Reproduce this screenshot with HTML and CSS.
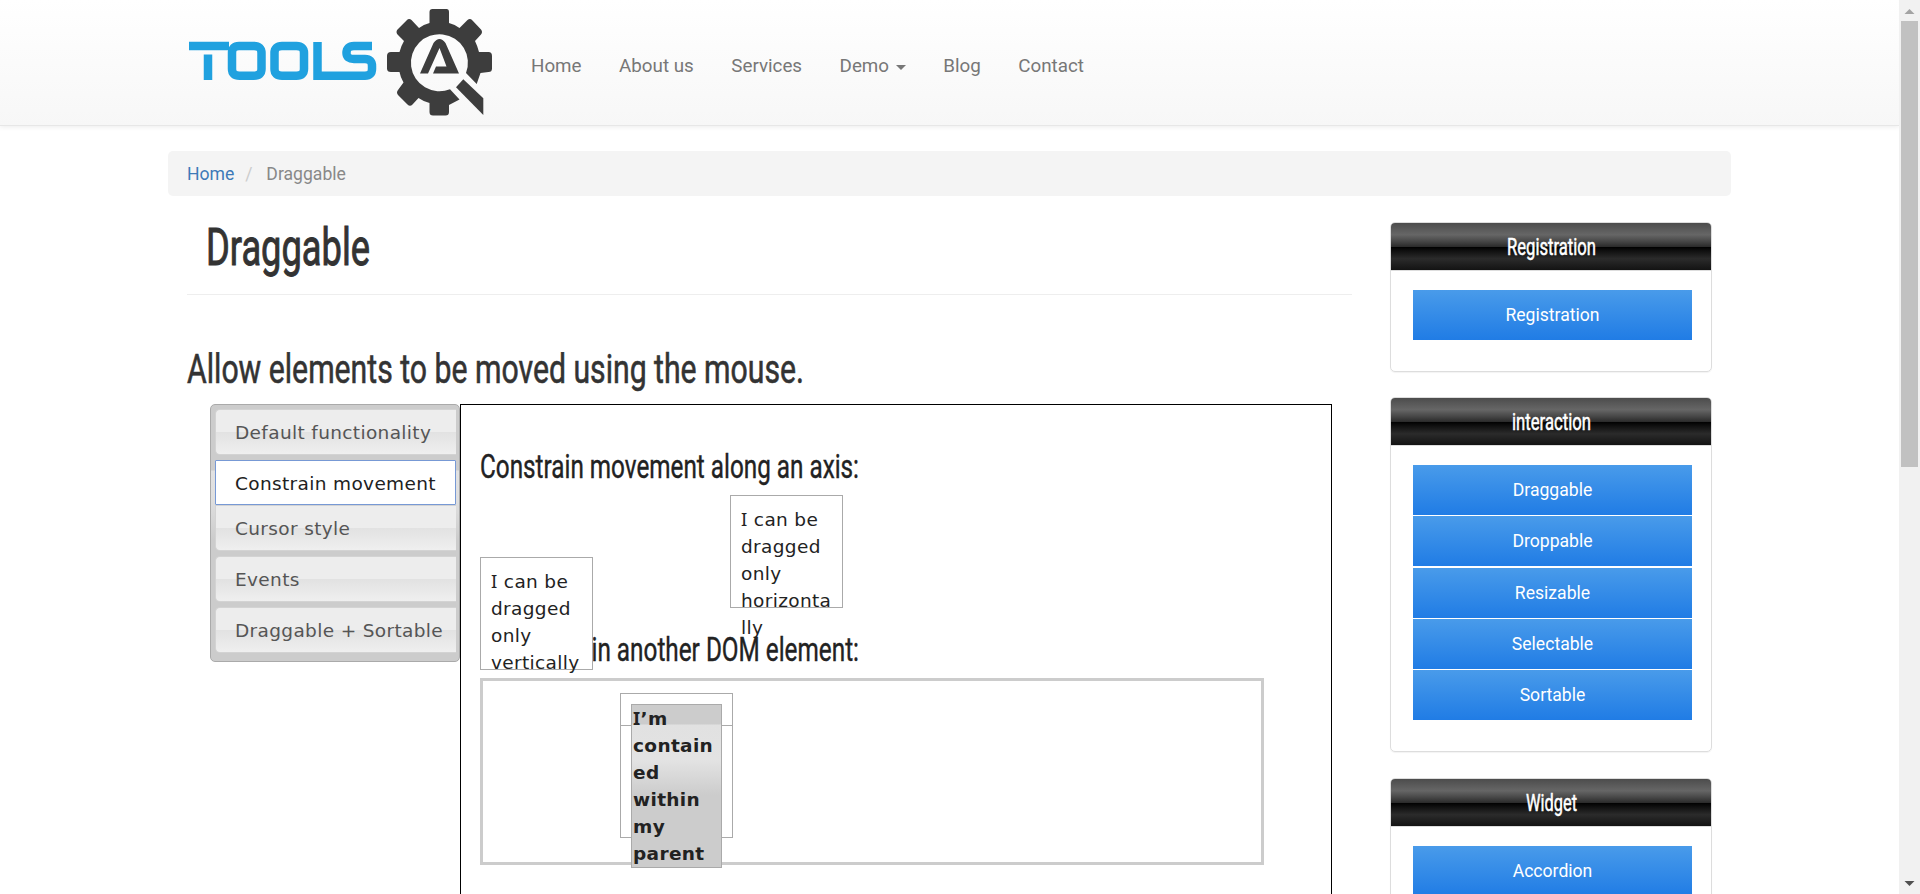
FILE: index.html
```html
<!DOCTYPE html>
<html lang="en">
<head>
<meta charset="utf-8">
<title>Draggable</title>
<link rel="stylesheet" href="styles.css">
</head>
<body>
<div class="page">
  <header class="navbar">
    <svg class="logo" width="310" height="120" viewBox="0 0 310 120">
      <g fill="none" stroke="#20a1df" stroke-width="8.5">
        <path d="M2 46H42M21 54.500V80"/>
        <path d="M52 46H67Q74.500 46 74.500 53V69Q74.500 75.700 67 75.700H52.500Q45 75.700 45 69V53Q45 46 52 46Z"/>
        <path d="M95 46H109.500Q117 46 117 53V69Q117 75.700 109.500 75.700H95Q87.500 75.700 87.500 69V53Q87.500 46 95 46Z"/>
        <path d="M130.500 42V75.700H178Q185 75.700 185 69V66Q185 59 178 59H167Q159.500 59 159.500 53Q159.500 46 167 46H185"/>
      </g>
      <g fill="#3d3d3d">
        <path d="M245.500 9H259.500Q262 9 262 12V23Q268 24.500 272.500 28L280.500 20Q283 18 285.500 20.500L294 29.500Q296 32 294 34.500L288 41Q290.500 46 292 52H301.500Q305 52 305 56V68.500Q305 72 301.500 72L293.500 73L289.700 84L279 73A28.500 28.500 0 1 0 263 89.200L272.500 99.500L262 105V112Q262 115.600 258.500 115.600H246Q242.500 115.600 242.500 112V103Q236.500 101.500 231.500 98L225.500 104.500Q223 107 220.500 104.500L211 95Q209 92.500 211 90L216.500 82.500Q213.500 77.500 212.500 72H204Q200 72 200 68.500V56Q200 52 204 52H212.500Q214 46 217 41L210.500 34.500Q208.500 32 210.500 29.500L219.500 20.500Q222 18 224.500 20L232 28Q236.500 24.500 242.500 23V12Q242.500 9 245.500 9Z"/>
        <path d="M276.300 79.300L269 87.300L296.300 115V98.300Z"/>
        <path d="M233 73.500L246.500 43Q252.500 35 258.500 43L272 73.500H246L249 66.500H259.500L252.500 48L241 73.500Z"/>
      </g>
    </svg>
    <nav class="menu">
      <a>Home</a><a>About us</a><a>Services</a><a>Demo <i class="caret"></i></a><a>Blog</a><a>Contact</a>
    </nav>
  </header>
  <div class="container">
    <div class="breadcrumb"><a>Home</a><span class="sep">/</span><span>Draggable</span></div>
    <div class="columns">
      <main class="main">
        <h1 class="title"><svg class="heading" width="600" height="73"><text x="19" y="44" font-size="51.600" textLength="164" lengthAdjust="spacingAndGlyphs">Draggable</text></svg></h1>
        <h2 class="subtitle"><svg class="heading" width="700" height="50"><text x="0" y="38" font-size="41.200" textLength="617" lengthAdjust="spacingAndGlyphs">Allow elements to be moved using the mouse.</text></svg></h2>
        <div class="tabs">
          <ul class="tablist">
            <li class="tab">Default functionality</li>
            <li class="tab active">Constrain movement</li>
            <li class="tab joined">Cursor style</li>
            <li class="tab">Events</li>
            <li class="tab">Draggable + Sortable</li>
          </ul>
          <section class="content">
            <svg class="heading dark" width="500" height="42"><text x="0" y="30" font-size="32.800" textLength="379" lengthAdjust="spacingAndGlyphs">Constrain movement along an axis:</text></svg>
            <div class="drag horizontal"><span class="cap">I</span> can be dragged only horizontally</div>
            <div class="drag vertical"><span class="cap">I</span> can be dragged only vertically</div>
            <svg class="heading dark second" width="500" height="42"><text x="1" y="30" font-size="32.800" textLength="110" lengthAdjust="spacingAndGlyphs">Or to with</text><text x="111.500" y="30" font-size="32.800" textLength="267.500" lengthAdjust="spacingAndGlyphs">in another DOM element:</text></svg>
            <div class="containment">
              <div class="outer">
                <div class="inner"></div>
                <p class="contained"><span class="cap">I</span>’m contained within my parent</p>
              </div>
            </div>
          </section>
        </div>
      </main>
      <aside class="sidebar">
        <section class="panel">
          <h3><svg class="heading light" width="320" height="47"><text x="116" y="32" font-size="23" textLength="89" lengthAdjust="spacingAndGlyphs">Registration</text></svg></h3>
          <div class="links"><a>Registration</a></div>
        </section>
        <section class="panel">
          <h3><svg class="heading light" width="320" height="47"><text x="121" y="32" font-size="23" textLength="79" lengthAdjust="spacingAndGlyphs">interaction</text></svg></h3>
          <div class="links"><a>Draggable</a><a>Droppable</a><a>Resizable</a><a>Selectable</a><a>Sortable</a></div>
        </section>
        <section class="panel">
          <h3><svg class="heading light" width="320" height="47"><text x="135" y="32" font-size="23" textLength="51" lengthAdjust="spacingAndGlyphs">Widget</text></svg></h3>
          <div class="links"><a>Accordion</a></div>
        </section>
      </aside>
    </div>
  </div>
</div>
<div class="scrollbar">
  <svg width="21" height="21"><path d="M5.500 14L10.500 9L15.500 14Z" fill="#a3a3a3"/></svg>
  <div class="thumb"></div>
  <svg width="21" height="21"><path d="M5.500 8L10.500 13L15.500 8Z" fill="#505050"/></svg>
</div>
</body>
</html>
```
FILE: styles.css
```css
* { box-sizing: border-box; }
body {
  margin: 0;
  height: 894px;
  overflow: hidden;
  display: flex;
  background: #fff;
  font: 17.600px/26px Roboto, sans-serif;
  color: #333;
}
h1, h2, h3, p, ul { margin: 0; padding: 0; font-weight: 400; }
.page { width: 1899px; height: 894px; overflow: hidden; }
.navbar {
  height: 126px;
  padding-left: 187px;
  display: flex;
  background: linear-gradient(#fff, #f7f7f7);
  border-bottom: 1px solid #e7e7e7;
  box-shadow: 0 1px 5px rgba(0, 0, 0, .08);
}
.logo { flex: none; }
.menu { display: flex; height: 26px; margin-top: 53px; margin-left: 34px; gap: 37.500px; color: #777; font-size: 18.800px; }
.menu a { white-space: nowrap; }
.caret { display: inline-block; border: 5px solid transparent; border-top-color: #777; border-bottom: 0; vertical-align: middle; margin-left: 2px; }
.container { width: 1563px; margin: 25px 0 0 168px; }
.breadcrumb { height: 45px; padding: 10px 19px; border-radius: 5px; background: #f4f4f4; color: #888; display: flex; }
.breadcrumb a { color: #3d7ab8; }
.breadcrumb .sep { width: 32px; padding-left: 11px; color: #ccc; }
.columns { display: flex; padding-left: 19px; }
.main { width: 1165px; margin-right: 38px; padding-top: 25px; }
.heading { display: block; overflow: visible; fill: #333; stroke: #333; stroke-width: .6px; font-family: Roboto, sans-serif; font-weight: 400; }
.dark { fill: #222; stroke: #222; stroke-width: .4px; }
.light { fill: #fff; stroke: #fff; stroke-width: .5px; }
.title { height: 74px; border-bottom: 1px solid #eee; }
.title .heading { stroke-width: 1px; }
.subtitle { margin-top: 50px; height: 59px; }
.tabs { display: flex; margin-left: 23px; font: 18.500px/27px "DejaVu Sans", sans-serif; letter-spacing: .350px; }
.tablist {
  width: 250px;
  height: 258px;
  padding: 4px 3px 0 4px;
  border: 1px solid #aaa;
  border-radius: 5px;
  list-style: none;
  background: linear-gradient(#ccc 65px, #e2e2e2 66px, #dfdfdf 95px, #ccc 135px);
}
.tab {
  height: 46px;
  margin-bottom: 5px;
  padding: 9px 0 0 19px;
  border: 1px solid #d3d3d3;
  border-right: 0;
  border-radius: 5px 0 0 5px;
  background: linear-gradient(#ededed 50%, #e2e2e2 51%, #efefef);
  color: #555;
  white-space: nowrap;
}
.tab.active { height: 45px; margin-bottom: 0; border: 1px solid #7799d5; border-radius: 1px; background: #fff; color: #212121; }
.tab.joined { border-radius: 0 0 0 5px; }
.content { position: relative; width: 872px; height: 700px; padding: 43px 20px 0; border: 1px solid #000; color: #222; }
.drag { width: 113px; height: 113px; padding: 10px 8px 10px 10px; border: 1px solid #aaa; background: #fff; overflow-wrap: anywhere; }
.cap { font-family: "Noto Sans", sans-serif; line-height: 1; }
/* Draggable boxes are freely positioned over the content. */
.horizontal { position: absolute; left: 269px; top: 90px; z-index: 2; background: none; }
.vertical { position: absolute; left: 19px; top: 152px; z-index: 1; }
.content .heading { margin-left: -1px; letter-spacing: 0; }
.content .second { margin-top: 141px; }
.containment { width: 784px; height: 187px; margin: 5px 0 0 -1px; border: 3px solid #ccc; }
.outer { position: relative; width: 113px; height: 145px; margin: 12px 0 0 137px; border: 1px solid #aaa; padding-top: 31px; }
.inner { width: 111px; border-top: 1px solid #aaa; }
.contained {
  position: absolute;
  left: 10px;
  top: 10px;
  width: 91px;
  height: 164px;
  padding: 0 0 0 1px;
  border: 1px solid #aaa;
  background: linear-gradient(#ccc 19px, #e1e1e1 20px, #e3e3e3 55px, #ccc 90px);
  font-weight: 700;
  overflow-wrap: anywhere;
}
.sidebar { width: 322px; padding-top: 26px; }
.panel { margin-bottom: 25px; border: 1px solid #ddd; border-radius: 5px; overflow: hidden; box-shadow: 0 1px 1px rgba(0, 0, 0, .05); }
.panel h3 { height: 48px; border-bottom: 1px solid #ddd; background: linear-gradient(#4c4c4c, #595959 12%, #666 25%, #474747 39%, #2c2c2c 50%, #000 51%, #111 60%, #2b2b2b 76%, #1c1c1c 91%, #131313); }
.links { padding: 19px 19px 31px 22px; display: flex; flex-direction: column; gap: 1.350px; }
.links a { height: 50px; line-height: 51px; text-align: center; color: #fff; background: linear-gradient(#499bea, #207ce5); }
.panel:nth-child(2) { margin-bottom: 26px; }
.scrollbar { width: 21px; height: 894px; background: #f1f1f1; display: flex; flex-direction: column; }
.scrollbar svg { flex: none; }
.scrollbar .thumb { width: 17px; height: 446px; margin: 0 0 406px 2px; background: #c1c1c1; }
```
